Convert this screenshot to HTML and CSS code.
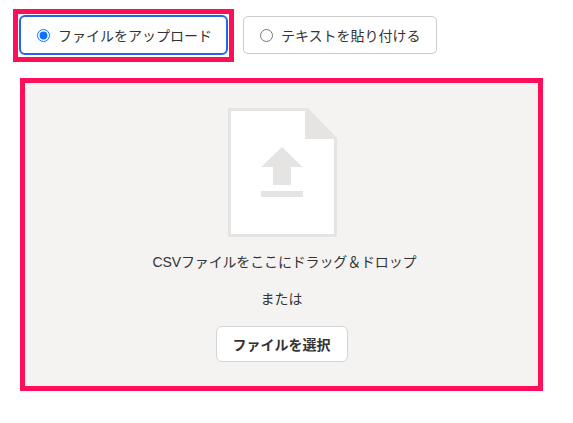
FILE: index.html
```html
<!DOCTYPE html>
<html lang="ja">
<head>
<meta charset="utf-8">
<link rel="stylesheet" href="styles.css">
<title>CSVアップロード</title>
</head>
<body>
  <div class="source_row">
    <div class="highlight highlight_tab">
      <label class="source_option source_option_active">
        <input type="radio" name="source" checked>
        <span>ファイルをアップロード</span>
      </label>
    </div>
    <label class="source_option">
      <input type="radio" name="source">
      <span>テキストを貼り付ける</span>
    </label>
  </div>
  <div class="highlight highlight_drop">
    <div class="drop_area">
      <svg class="file_icon" width="109" height="129" viewBox="0 0 109 129">
        <path d="M1.5 1.5H79L107.500 31V127.500H1.500Z" fill="#fff" stroke="#e5e4e2" stroke-width="3"/>
        <path d="M77 0H79.500L109 30V31H77Z" fill="#e5e4e2"/>
        <path d="M54 39L74.500 59H63V77H45V59H33Z" fill="#e5e4e2"/>
        <rect x="33" y="83" width="42" height="6" fill="#e5e4e2"/>
      </svg>
      <p class="drop_text csv_text">CSVファイルをここにドラッグ＆ドロップ</p>
      <p class="drop_text or_text">または</p>
      <button type="button" class="select_button">ファイルを選択</button>
    </div>
  </div>
</body>
</html>
```

FILE: styles.css
```css
* {
  box-sizing: border-box;
}

body {
  margin: 0;
  padding: 9px 30px 0 13px;
  background-color: #fff;
  color: #333;
  font-family: "Liberation Sans", "Noto Sans CJK JP", sans-serif;
  font-size: 14px;
}

.source_row {
  display: flex;
  align-items: flex-start;
  gap: 9px;
}

.highlight {
  border: 5px solid #ff0f5a;
}

.highlight_tab {
  padding: 1px 1px 2px;
}

.highlight_drop {
  margin: 16px 0 0 7px;
}

.source_option {
  display: flex;
  align-items: center;
  width: 194px;
  height: 38px;
  margin-top: 7px;
  padding: 0 16px;
  border: 1px solid #ccc;
  border-radius: 5px;
  background-color: #fff;
  white-space: nowrap;
}

.source_option input {
  width: 13px;
  height: 13px;
  margin: 0 8px 0 0;
  accent-color: #0f6fff;
}

.source_option_active {
  width: 209px;
  height: 40px;
  margin-top: 0;
  border: 2px solid #2563eb;
  border-radius: 6px;
}

.drop_area {
  display: flex;
  flex-direction: column;
  align-items: center;
  height: 303px;
  padding-top: 25px;
  background-color: #f4f3f1;
}

.file_icon {
  display: block;
  margin-left: 2px;
}

.drop_text {
  margin: 15px 0 0;
  line-height: 20px;
}

.csv_text {
  padding-left: 6px;
  letter-spacing: -0.15px;
}

.or_text {
  margin-top: 17px;
}

.select_button {
  width: 132px;
  height: 36px;
  margin-top: 17px;
  border: 1px solid #d4d4d4;
  border-radius: 6px;
  background-color: #fff;
  color: #333;
  font-family: inherit;
  font-size: 14px;
  font-weight: bold;
}
```
